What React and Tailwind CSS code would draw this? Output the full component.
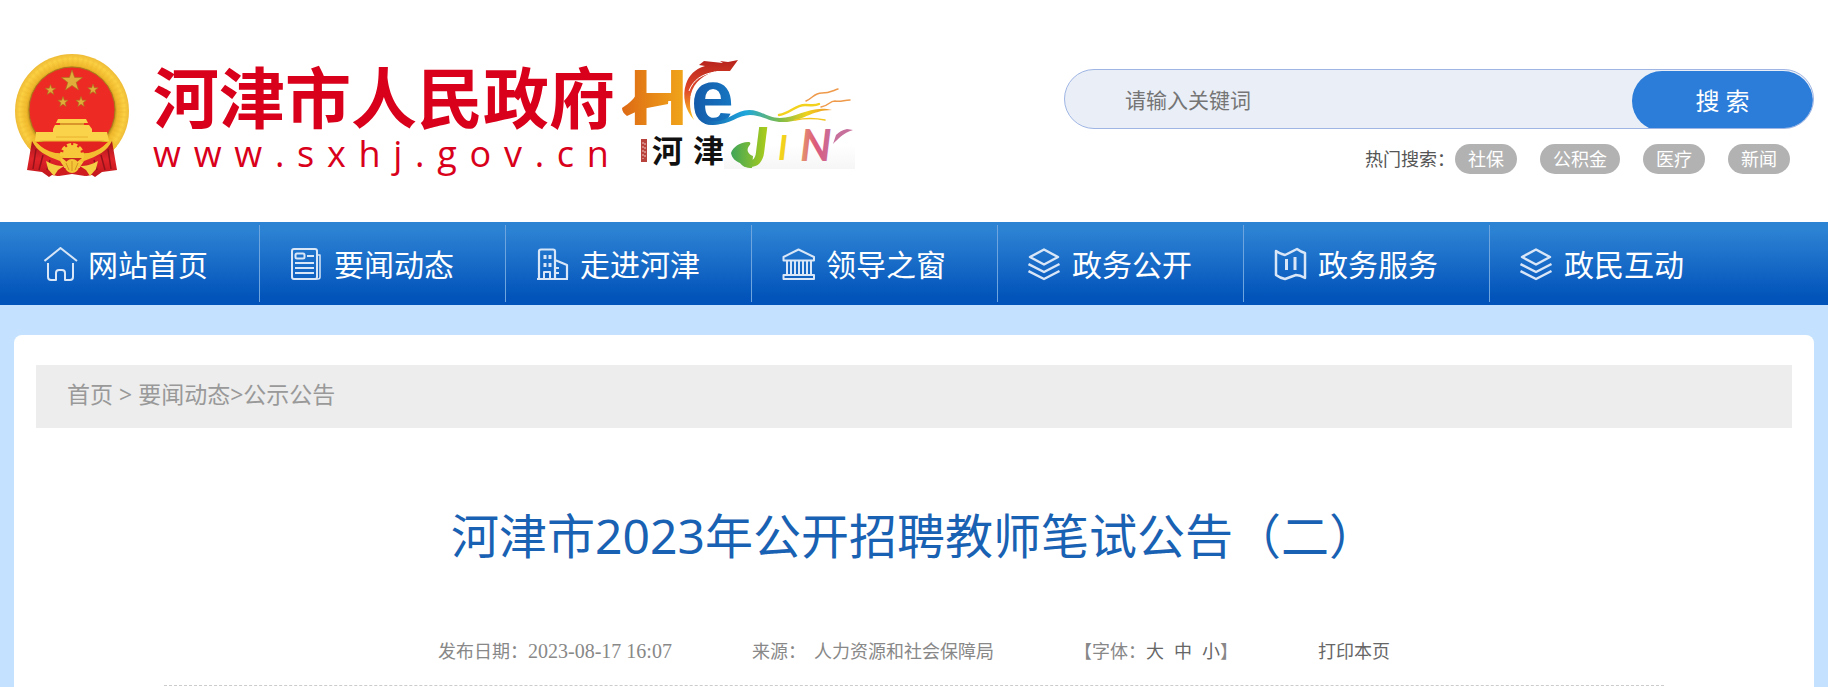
import React from 'react';

const SITE_URL = 'www.sxhj.gov.cn';

const HOT_WORDS = ['社保', '公积金', '医疗', '新闻'];

const starPoints = (cx, cy, r) =>
  Array.from({ length: 10 }, (_, i) => {
    const radius = i % 2 === 0 ? r : r * 0.4;
    const angle = (Math.PI / 5) * i - Math.PI / 2;
    return `${(cx + radius * Math.cos(angle)).toFixed(1)},${(cy + radius * Math.sin(angle)).toFixed(1)}`;
  }).join(' ');

const Emblem = () => (
  <svg viewBox="15 54 114 124" className="h-[124px] w-[114px] shrink-0" aria-hidden="true">
    <defs>
      <radialGradient id="gold" cx="0.5" cy="0.5" r="0.5">
        <stop offset="0.74" stopColor="#b98a1c" />
        <stop offset="0.8" stopColor="#f0b92c" />
        <stop offset="0.92" stopColor="#fbd042" />
        <stop offset="1" stopColor="#eebb36" />
      </radialGradient>
      <linearGradient id="drape" x1="0" y1="0" x2="0" y2="1">
        <stop offset="0" stopColor="#a5141a" />
        <stop offset="0.5" stopColor="#e0242a" />
        <stop offset="1" stopColor="#c0161c" />
      </linearGradient>
    </defs>
    <circle cx="72" cy="111" r="57" fill="url(#gold)" />
    <circle cx="72" cy="111" r="50" fill="none" stroke="#e2a529" strokeWidth="9" strokeDasharray="2 3" opacity="0.15" />
    <circle cx="72" cy="110" r="43" fill="#ed2b24" stroke="#a8791a" strokeWidth="1" />
    <g fill="#e0ad3a" stroke="#a5751c" strokeWidth="0.6">
      <polygon points={starPoints(72, 81, 11)} />
      <polygon points={starPoints(50.5, 90, 5.5)} />
      <polygon points={starPoints(93, 89.5, 5.5)} />
      <polygon points={starPoints(63, 102, 5.5)} />
      <polygon points={starPoints(81, 102, 5.5)} />
    </g>
    <g fill="#fbd34a">
      <path d="M58 119h28l2 4H56z" />
      <path d="M60 123h24v3H60z" fill="#d9962a" />
      <path d="M55 125h34l3 4v3H53v-3z" />
      <path d="M36 132h71l2 9H35z" />
    </g>
    <path d="M56 137h32M40 141h64" stroke="#e8b02e" strokeWidth="1" />
    <path d="M36 142h72L96 153H48z" fill="#e3231f" />
    <path d="M33 139c9 11 22 16 39 16s30-5 39-16l6 7c-10 11-26 17-45 17s-35-6-45-17z" fill="#f3bf31" />
    <path d="M32 141c5 10 14 15 28 20l6 9-8 6-6-1-3 2-7-5-15-2z" fill="url(#drape)" />
    <path d="M112 141c-5 10-14 15-28 20l-6 9 8 6 6-1 3 2 7-5 15-2z" fill="url(#drape)" />
    <path d="M36 149l-3 20M43 155l-4 15M50 160l-3 10M108 149l3 20M101 155l4 15M94 160l3 10" stroke="#94131a" strokeWidth="1.5" />
    <path d="M56 168h32l4 6-7 2-13-2-13 2-7-2z" fill="#cf1c1f" />
    <circle cx="72" cy="155" r="10" fill="none" stroke="#f7c93a" strokeWidth="4" strokeDasharray="4 2" />
    <circle cx="72" cy="154" r="9" fill="#f7c93a" />
    <path d="M62 158h20l-5 4H67z" fill="#c8281f" />
    <path d="M46 161c7 4 12 5 18 5l-6 4-4 6-6-7z" fill="#f4cf45" />
    <path d="M98 161c-7 4-12 5-18 5l6 4 4 6 6-7z" fill="#f4cf45" />
    <circle cx="72" cy="166" r="7" fill="#f4c637" />
    <path d="M72 161v10M66 163l3 7M78 163l-3 7" stroke="#d58f22" strokeWidth="1" />
  </svg>
);

const CityLogo = () => (
  <svg
    viewBox="620 54 240 120"
    className="h-[120px] w-[240px] shrink-0 overflow-visible"
    role="img"
    aria-label="HE JIN 河津"
  >
    <defs>
      <linearGradient id="orange" gradientUnits="userSpaceOnUse" x1="623" y1="0" x2="684" y2="0">
        <stop offset="0" stopColor="#dd6a14" />
        <stop offset="1" stopColor="#f0a41a" />
      </linearGradient>
      <linearGradient id="blue" x1="0" y1="0" x2="1" y2="0">
        <stop offset="0" stopColor="#1559a8" />
        <stop offset="1" stopColor="#1677c2" />
      </linearGradient>
      <linearGradient id="wave" gradientUnits="userSpaceOnUse" x1="700" y1="0" x2="835" y2="0">
        <stop offset="0" stopColor="#1559a8" />
        <stop offset="0.35" stopColor="#1ea7dc" />
        <stop offset="0.6" stopColor="#7dbb4a" />
        <stop offset="0.8" stopColor="#f0d21c" />
        <stop offset="1" stopColor="#f08a2c" />
      </linearGradient>
      <linearGradient id="flame" gradientUnits="userSpaceOnUse" x1="0" y1="62" x2="0" y2="118">
        <stop offset="0" stopColor="#b9251c" />
        <stop offset="0.5" stopColor="#e0482a" />
        <stop offset="1" stopColor="#fbc21c" />
      </linearGradient>
      <linearGradient id="leaf" gradientUnits="userSpaceOnUse" x1="732" y1="0" x2="767" y2="0">
        <stop offset="0" stopColor="#3fa55a" />
        <stop offset="1" stopColor="#a8cb1c" />
      </linearGradient>
      <linearGradient id="rose" x1="0" y1="0" x2="1" y2="0">
        <stop offset="0" stopColor="#e59a6c" />
        <stop offset="0.5" stopColor="#dc5a7c" />
        <stop offset="1" stopColor="#c8709c" />
      </linearGradient>
      <linearGradient id="mist" x1="0" y1="0" x2="0" y2="1">
        <stop offset="0" stopColor="#fff" />
        <stop offset="1" stopColor="#f6f6f6" />
      </linearGradient>
    </defs>
    <rect x="725" y="145" width="131" height="24" fill="url(#mist)" />
    <path d="M623 108c8-5 13-10 16-17l6 6 25-4-1 11-26 5c-5 2-10 5-15 7-3-2-5-5-5-8z" fill="url(#orange)" />
    <text x="630" y="125" fontSize="77" fontWeight="900" fontFamily="Lato, sans-serif" fill="url(#orange)">
      H
    </text>
    <text x="692" y="124" fontSize="77" fontWeight="700" fontFamily="'Liberation Sans', sans-serif" fill="url(#blue)">
      e
    </text>
    <path d="M695 120c-9-10-12-24-8-36 3-9 9-15 19-18l-6-1 5-4 19 2-3-2 8 1 10-2-8 11h-13c-13 3-23 11-26 23-2 9-1 18 3 26z" fill="url(#flame)" />
    <path d="M690 91c4-11 13-17 26-19M692 97c3-11 11-18 21-22" fill="none" stroke="#fff" strokeWidth="1" />
    <path d="M706 119c20 8 28-9 44-9 12 0 18 8 31 8 18 0 30-13 52-8-22 0-31 13-50 12-13 0-20-7-32-7-14 0-22 13-45 9z" fill="url(#wave)" />
    <g fill="none" strokeLinecap="round">
      <path d="M780 115c12-2 16-10 26-10 8 0 10 1 14-1" stroke="#f3d21e" strokeWidth="2.5" />
      <path d="M807 101c7-3 8-8 16-8 7 0 10-2 16-4" stroke="#ee9a4a" strokeWidth="1.5" />
      <path d="M822 107c8-1 8-6 14-6 6 1 9-1 15-1" stroke="#ee9a4a" strokeWidth="1.5" />
      <path d="M796 120c10-2 20-2 30 0" stroke="#f3c61e" strokeWidth="1.5" />
    </g>
    <rect x="642" y="139" width="6" height="23" fill="#b8433c" />
    <path d="M644 142v17M646 143v14" stroke="#f0c4bf" strokeDasharray="2 2" />
    <text x="653" y="162" fontSize="31" fontWeight="700" fontFamily="'Noto Sans CJK SC', sans-serif" fill="#111">
      河
    </text>
    <text x="694" y="162" fontSize="31" fontWeight="700" fontFamily="'Noto Sans CJK SC', sans-serif" fill="#111">
      津
    </text>
    <path d="M732 153c2-6 9-11 17-11 3 0 3 2 1 4-3 4-1 8 4 10l-1 12c-6 0-10-2-12-5-5-2-8-5-9-10z" fill="url(#leaf)" />
    <text x="746" y="167" fontSize="56" fontWeight="900" fontStyle="italic" fontFamily="Lato, sans-serif" fill="url(#leaf)">
      J
    </text>
    <text x="779" y="160" fontSize="34" fontWeight="700" fontStyle="italic" fontFamily="Lato, sans-serif" fill="#f3d21e">
      I
    </text>
    <text x="801" y="161" fontSize="44" fontWeight="700" fontStyle="italic" fontFamily="Lato, sans-serif" fill="url(#rose)">
      N
    </text>
    <path d="M834 144c5-5 10-11 20-14l-6-1c-5 1-8 3-11 6z" fill="#c8709c" />
  </svg>
);

const NavIcon = ({ children }) => (
  <svg
    viewBox="0 0 34 34"
    className="h-[34px] w-[34px] shrink-0"
    fill="none"
    stroke="#d8e6f7"
    strokeWidth="2"
    strokeLinejoin="round"
    aria-hidden="true"
  >
    {children}
  </svg>
);

const HomeIcon = () => (
  <NavIcon>
    <path d="M0.500 14L16.500 1l16.500 13" />
    <path d="M4 16V30q0 3 3 3h5v-7q0-3 3-3h3q3 0 3 3v7h5q3 0 3-3V16" />
  </NavIcon>
);

const NewsIcon = () => (
  <NavIcon>
    <rect x="2" y="2" width="25" height="30" rx="2" />
    <path d="M27 8h3v22q0 2-2 2h-4" strokeWidth="1.500" />
    <rect x="5.500" y="6.500" width="9" height="5" rx="1.500" />
    <path d="M17 9h7M5 16h19M5 21h19M5 26h19" />
  </NavIcon>
);

const BuildingIcon = () => (
  <NavIcon>
    <path d="M3 31V4.500q0-2 2-2h12q2 0 2 2V31M19 13l12 5v13M1 32h31" strokeWidth="2.200" />
    <path d="M8 31v-6h6v6M19 21h4M19 26h4" />
    <path d="M9 8v4M14 8v4M9 16v4M14 16v4" strokeWidth="3" />
  </NavIcon>
);

const BankIcon = () => (
  <NavIcon>
    <path d="M1.500 13.500V10L16.500 2.500l15.500 7.500v3.500zM1.500 28h30.500v4H1.500z" />
    <path d="M5 14v13M9 14v13M13 14v13M17 14v13M21 14v13M25 14v13M29 14v13" />
  </NavIcon>
);

const LayersIcon = () => (
  <NavIcon>
    <path
      d="M16 2.500L30 10 16 17.500 2 10zM0.500 17L16 25l15.500-8M0.500 24L16 32l15.500-8"
      strokeWidth="2.500"
    />
  </NavIcon>
);

const MapIcon = () => (
  <NavIcon>
    <path d="M2 4q4 3 9 4l12-6q4 3 8 4v25q-5-3-9-3l-11 4q-5-1-9-4z" strokeWidth="2.500" />
    <path d="M12.500 12v11M21 10v13" strokeWidth="3" />
  </NavIcon>
);

const NAV_ITEMS = [
  { label: '网站首页', Icon: HomeIcon },
  { label: '要闻动态', Icon: NewsIcon },
  { label: '走进河津', Icon: BuildingIcon },
  { label: '领导之窗', Icon: BankIcon },
  { label: '政务公开', Icon: LayersIcon },
  { label: '政务服务', Icon: MapIcon },
  { label: '政民互动', Icon: LayersIcon },
];

const Header = () => (
  <header className="flex items-start justify-between gap-8 bg-white px-[14px] pt-[54px] pb-11">
    <a href="#" className="flex shrink-0 items-start pl-px">
      <Emblem />
      <div className="ml-6 pt-2 text-[#d9001b]">
        <div className="text-[66px] leading-[70px] font-bold">河津市人民政府</div>
        <div className="flex justify-between pr-1.5 font-['Open_Sans'] text-[36px] leading-[44px]">
          {SITE_URL.split('').map((char, i) => (
            <span key={i}>{char}</span>
          ))}
        </div>
      </div>
      <div className="ml-1">
        <CityLogo />
      </div>
    </a>

    <div className="max-w-[750px] flex-1 pt-[15px]">
      <form
        className="flex h-[60px] overflow-hidden rounded-full border border-[#9fb5e4] bg-[#eaeff7]"
        onSubmit={(e) => e.preventDefault()}
      >
        <input
          type="text"
          aria-label="请输入关键词"
          placeholder="请输入关键词"
          className="min-w-0 flex-1 bg-transparent pt-1 pl-[60px] text-[21px] text-gray-800 outline-none placeholder:text-[#757575]"
        />
        <button type="submit" className="mt-px h-[60px] w-[181px] rounded-full bg-[#2c7cd9] text-2xl text-white">
          搜 索
        </button>
      </form>
      <div className="mt-[15px] flex items-center justify-end pr-6 text-[18px] leading-[30px]">
        <span className="text-[#555]">热门搜索：</span>
        <div className="flex gap-[23px]">
          {HOT_WORDS.map((word) => (
            <a key={word} href="#" className="rounded-full bg-[#b2b2b2] px-[13px] text-white">
              {word}
            </a>
          ))}
        </div>
      </div>
    </div>
  </header>
);

const Nav = () => (
  <nav className="bg-linear-to-b from-[#2c82d3] from-10% to-[#0254ba] to-90% px-[14px] py-[3px]">
    <ul className="flex">
      {NAV_ITEMS.map(({ label, Icon }) => (
        <li key={label} className="w-[246px] border-r border-[#6fa5df] last:border-r-0">
          <a href="#" className="flex h-[77px] items-center gap-2.5 pl-[30px] text-[30px] leading-[40px] text-white">
            <Icon />
            <span className="pt-0.5 whitespace-nowrap">{label}</span>
          </a>
        </li>
      ))}
    </ul>
  </nav>
);

const Article = () => (
  <article className="px-32 pt-[70px]">
    <h1 className="text-center text-[48px] leading-[76px] text-[#1861b3]">河津市2023年公开招聘教师笔试公告（二）</h1>
    <div className="mt-[63px] flex justify-center gap-20 border-b border-dashed border-[#ccc] pb-5 text-[18px] leading-[28px] whitespace-nowrap text-[#888]">
      <span className="flex">
        发布日期：
        <time className="font-['Liberation_Serif'] text-[20px]">2023-08-17 16:07</time>
      </span>
      <span className="flex gap-2">
        <span>来源：</span>
        <span>人力资源和社会保障局</span>
      </span>
      <span className="flex">
        【字体：
        <span className="flex gap-2.5 text-[#666]">
          <button type="button">大</button>
          <button type="button">中</button>
          <button type="button">小</button>
        </span>
        】
      </span>
      <button type="button" className="text-[#666]">
        打印本页
      </button>
    </div>
  </article>
);

const App = () => (
  <div className="min-h-screen bg-[#c4e1ff] font-['Noto_Sans','Noto_Sans_CJK_SC',sans-serif]">
    <Header />
    <Nav />
    <main className="px-[14px] pt-[30px]">
      <div className="min-h-[352px] rounded-t-lg bg-white px-[22px] pt-[30px]">
        <div className="flex bg-[#ededed] px-[31px] pt-3.5 pb-[18px] text-[23px] leading-[31px] whitespace-pre text-[#999]">
          <a href="#">首页</a>
          <span> &gt; </span>
          <a href="#">要闻动态</a>
          <span>&gt;</span>
          <a href="#">公示公告</a>
        </div>
        <Article />
      </div>
    </main>
  </div>
);

export default App;
